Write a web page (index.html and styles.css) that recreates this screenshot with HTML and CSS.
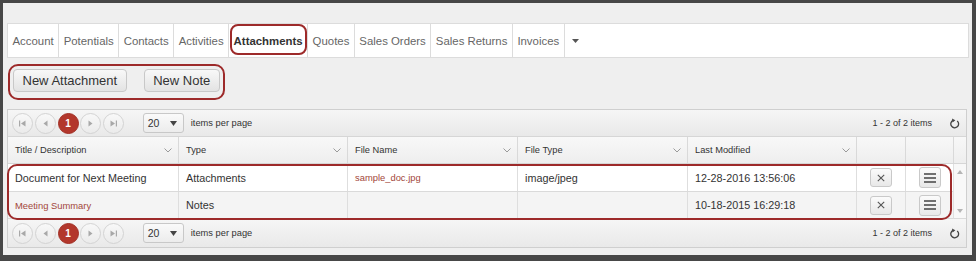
FILE: index.html
```html
<!DOCTYPE html>
<html>
<head>
<meta charset="utf-8">
<link rel="stylesheet" href="styles.css">
</head>
<body>
<div class="panel">
  <ul class="tabs">
    <li class="tab">Account</li>
    <li class="tab">Potentials</li>
    <li class="tab">Contacts</li>
    <li class="tab">Activities</li>
    <li class="tab active">Attachments</li>
    <li class="tab">Quotes</li>
    <li class="tab">Sales Orders</li>
    <li class="tab">Sales Returns</li>
    <li class="tab">Invoices</li>
    <li class="tab more"><svg width="7" height="4" viewBox="0 0 7 4"><path d="M0 0H7L3.5 4Z" fill="#555"/></svg></li>
  </ul>

  <div class="toolbar">
    <div class="callout">
      <button class="btn">New Attachment</button>
      <button class="btn">New Note</button>
    </div>
  </div>

  <div class="grid">
    <div class="pager">
      <span class="pbtn"><svg width="7" height="7" viewBox="0 0 7 7"><rect x="0" y="0.5" width="1.2" height="6" fill="#a8a8a8"/><path d="M6.5 0.5V6.5L2 3.5Z" fill="#a8a8a8"/></svg></span>
      <span class="pbtn"><svg width="5" height="7" viewBox="0 0 5 7"><path d="M4.5 0.5V6.5L0.5 3.5Z" fill="#a8a8a8"/></svg></span>
      <span class="pbtn current">1</span>
      <span class="pbtn"><svg width="5" height="7" viewBox="0 0 5 7"><path d="M0.5 0.5V6.5L4.5 3.5Z" fill="#a8a8a8"/></svg></span>
      <span class="pbtn"><svg width="7" height="7" viewBox="0 0 7 7"><path d="M0.5 0.5V6.5L5 3.5Z" fill="#a8a8a8"/><rect x="5.8" y="0.5" width="1.2" height="6" fill="#a8a8a8"/></svg></span>
      <span class="psize">20<svg class="caret" width="7" height="5" viewBox="0 0 7 5"><path d="M0 0H7L3.5 5Z" fill="#444"/></svg></span>
      <span class="plabel">items per page</span>
      <span class="pinfo">1 - 2 of 2 items</span>
      <span class="refresh"><svg width="10" height="11" viewBox="0 0 10 11"><path d="M7.2 2.9A3.9 3.9 0 1 1 3.2 2.3" fill="none" stroke="#444" stroke-width="1.3"/><path d="M2 0.6L5.4 2.2L2.6 4.6Z" fill="#444"/></svg></span>
    </div>

    <div class="ghead">
      <div class="hcell"><span>Title / Description</span><svg class="chev" width="8" height="5" viewBox="0 0 8 5"><path d="M0.5 0.5L4 4L7.5 0.5" fill="none" stroke="#9a9a9a"/></svg></div>
      <div class="hcell"><span>Type</span><svg class="chev" width="8" height="5" viewBox="0 0 8 5"><path d="M0.5 0.5L4 4L7.5 0.5" fill="none" stroke="#9a9a9a"/></svg></div>
      <div class="hcell"><span>File Name</span><svg class="chev" width="8" height="5" viewBox="0 0 8 5"><path d="M0.5 0.5L4 4L7.5 0.5" fill="none" stroke="#9a9a9a"/></svg></div>
      <div class="hcell"><span>File Type</span><svg class="chev" width="8" height="5" viewBox="0 0 8 5"><path d="M0.5 0.5L4 4L7.5 0.5" fill="none" stroke="#9a9a9a"/></svg></div>
      <div class="hcell"><span>Last Modified</span><svg class="chev" width="8" height="5" viewBox="0 0 8 5"><path d="M0.5 0.5L4 4L7.5 0.5" fill="none" stroke="#9a9a9a"/></svg></div>
      <div class="hcell"></div>
      <div class="hcell"></div>
      <div class="hcell"></div>
    </div>

    <div class="gbody">
      <div class="rows">
        <div class="row">
          <div class="cell">Document for Next Meeting</div>
          <div class="cell">Attachments</div>
          <div class="cell"><span class="link">sample_doc.jpg</span></div>
          <div class="cell">image/jpeg</div>
          <div class="cell">12-28-2016 13:56:06</div>
          <div class="cell act"><span class="xbtn"><svg width="8" height="8" viewBox="0 0 8 8"><path d="M0.8 0.8L7.2 7.2M7.2 0.8L0.8 7.2" stroke="#555" stroke-width="1.1"/></svg></span></div>
          <div class="cell act"><span class="mbtn"><svg width="12" height="10" viewBox="0 0 12 10"><path d="M0 1H12M0 5H12M0 9H12" stroke="#444" stroke-width="1.6"/></svg></span></div>
        </div>
        <div class="row alt">
          <div class="cell"><span class="link">Meeting Summary</span></div>
          <div class="cell">Notes</div>
          <div class="cell"></div>
          <div class="cell"></div>
          <div class="cell">10-18-2015 16:29:18</div>
          <div class="cell act"><span class="xbtn"><svg width="8" height="8" viewBox="0 0 8 8"><path d="M0.8 0.8L7.2 7.2M7.2 0.8L0.8 7.2" stroke="#555" stroke-width="1.1"/></svg></span></div>
          <div class="cell act"><span class="mbtn"><svg width="12" height="10" viewBox="0 0 12 10"><path d="M0 1H12M0 5H12M0 9H12" stroke="#444" stroke-width="1.6"/></svg></span></div>
        </div>
      </div>
      <div class="vscroll">
        <svg width="6" height="4" viewBox="0 0 6 4"><path d="M0 4H6L3 0Z" fill="#b5b5b5"/></svg>
        <svg width="6" height="4" viewBox="0 0 6 4"><path d="M0 0H6L3 4Z" fill="#b5b5b5"/></svg>
      </div>
      <div class="rows-callout"></div>
    </div>

    <div class="pager bottom">
      <span class="pbtn"><svg width="7" height="7" viewBox="0 0 7 7"><rect x="0" y="0.5" width="1.2" height="6" fill="#a8a8a8"/><path d="M6.5 0.5V6.5L2 3.5Z" fill="#a8a8a8"/></svg></span>
      <span class="pbtn"><svg width="5" height="7" viewBox="0 0 5 7"><path d="M4.5 0.5V6.5L0.5 3.5Z" fill="#a8a8a8"/></svg></span>
      <span class="pbtn current">1</span>
      <span class="pbtn"><svg width="5" height="7" viewBox="0 0 5 7"><path d="M0.5 0.5V6.5L4.5 3.5Z" fill="#a8a8a8"/></svg></span>
      <span class="pbtn"><svg width="7" height="7" viewBox="0 0 7 7"><path d="M0.5 0.5V6.5L5 3.5Z" fill="#a8a8a8"/><rect x="5.8" y="0.5" width="1.2" height="6" fill="#a8a8a8"/></svg></span>
      <span class="psize">20<svg class="caret" width="7" height="5" viewBox="0 0 7 5"><path d="M0 0H7L3.5 5Z" fill="#444"/></svg></span>
      <span class="plabel">items per page</span>
      <span class="pinfo">1 - 2 of 2 items</span>
      <span class="refresh"><svg width="10" height="11" viewBox="0 0 10 11"><path d="M7.2 2.9A3.9 3.9 0 1 1 3.2 2.3" fill="none" stroke="#444" stroke-width="1.3"/><path d="M2 0.6L5.4 2.2L2.6 4.6Z" fill="#444"/></svg></span>
    </div>
  </div>
</div>
</body>
</html>
```

FILE: styles.css
```css
* { box-sizing: border-box; }

body {
  margin: 0;
  background: #474747;
  font-family: "Liberation Sans", Arial, sans-serif;
}

.panel {
  margin: 3px 4px 0 3px;
  height: 252px;
  background: #efefef;
  padding: 20px 3px 0 4px;
}

/* tabs */
.tabs {
  list-style: none;
  margin: 0;
  padding: 0;
  display: flex;
  height: 35px;
  background: #fff;
  border: 1px solid #dcdcdc;
}
.tab {
  position: relative;
  display: flex;
  align-items: center;
  padding: 0 4.5px;
  border-right: 1px solid #dcdcdc;
  font-size: 11.4px;
  color: #666;
}
.tab.active {
  font-weight: bold;
  font-size: 11.4px;
  color: #333;
}
.tab.active::after {
  content: "";
  position: absolute;
  left: 1px;
  right: 0;
  top: 0;
  bottom: 2px;
  border: 2px solid #9d2a2a;
  border-radius: 8px;
}
.tab.more {
  border-right: none;
  padding: 0 7px;
}

/* toolbar */
.toolbar {
  display: flex;
  margin: 6px 0 0 1px;
}
.callout {
  display: flex;
  gap: 17px;
  padding: 3px 3px 6px 3px;
  border: 2px solid #9d2a2a;
  border-radius: 10px;
}
.btn {
  height: 23px;
  padding: 0 8.5px;
  font-family: "Liberation Sans", Arial, sans-serif;
  font-size: 13px;
  color: #333;
  background: linear-gradient(#f8f8f8, #e3e3e3);
  border: 1px solid #c8c8c8;
  border-radius: 4px;
}

/* grid */
.grid {
  margin-top: 9px;
  width: 960px;
  border: 1px solid #cfcfcf;
  background: #fff;
}
.pager {
  display: flex;
  align-items: center;
  height: 27px;
  padding: 0 6px 0 4px;
  background: linear-gradient(#f6f6f6, #e9e9e9);
  border-bottom: 1px solid #d6d6d6;
  font-size: 9.3px;
  color: #333;
}
.pager.bottom {
  height: 28px;
  border-bottom: none;
}
.pbtn {
  width: 21px;
  height: 21px;
  margin-right: 1.75px;
  border-radius: 50%;
  border: 1px solid #d3d3d3;
  background: linear-gradient(#f8f8f8, #ebebeb);
  display: flex;
  align-items: center;
  justify-content: center;
}
.pbtn.current {
  background: #b3372c;
  border-color: #a23025;
  color: #fff;
  font-weight: bold;
  font-size: 10px;
}
.psize {
  margin-left: 17px;
  width: 41px;
  height: 20px;
  border: 1px solid #c8c8c8;
  border-radius: 3px;
  background: linear-gradient(#fafafa, #ececec);
  display: flex;
  align-items: center;
  justify-content: space-between;
  padding: 0 6px 0 4px;
  font-size: 10.5px;
  color: #333;
}
.plabel {
  margin-left: 7px;
}
.pinfo {
  margin-left: auto;
  font-size: 9px;
}
.refresh {
  margin-left: 18px;
  display: flex;
}

.ghead {
  display: grid;
  grid-template-columns: 170px 169px 170px 170px 169px 49px 48px 13px;
  height: 27px;
  background: linear-gradient(#f8f8f8, #eeeeee);
  border-bottom: 1px solid #d6d6d6;
}
.hcell {
  display: flex;
  align-items: center;
  justify-content: space-between;
  padding: 0 6px 0 7px;
  border-left: 1px solid #d9d9d9;
  font-size: 9.3px;
  color: #333;
}
.hcell:first-child { border-left: none; }

.gbody {
  position: relative;
  display: flex;
}
.rows { width: 945px; }
.row {
  display: grid;
  grid-template-columns: 170px 169px 170px 170px 169px 49px 48px;
  height: 28px;
  border-bottom: 1px solid #dadada;
  background: #fff;
}
.row.alt {
  height: 27px;
  background: #f4f4f4;
}
.cell {
  display: flex;
  align-items: center;
  padding: 0 6px 0 7px;
  border-left: 1px solid #dedede;
  font-size: 10.8px;
  color: #333;
}
.cell:first-child { border-left: none; }
.cell.act {
  justify-content: center;
  padding: 0;
}
.link {
  font-size: 9.4px;
  color: #a3473b;
}
.xbtn, .mbtn {
  display: flex;
  align-items: center;
  justify-content: center;
  width: 22px;
  height: 19px;
  border: 1px solid #c9c9c9;
  border-radius: 3px;
  background: linear-gradient(#fbfbfb, #e8e8e8);
}
.mbtn { height: 21px; }

.vscroll {
  width: 13px;
  border-left: 1px solid #e0e0e0;
  border-bottom: 1px solid #dadada;
  background: #f8f8f8;
  display: flex;
  flex-direction: column;
  justify-content: space-between;
  align-items: center;
  padding: 6px 0 5px;
}
.rows-callout {
  position: absolute;
  left: -1px;
  top: 0;
  width: 945px;
  height: 56px;
  border: 2px solid #9d2a2a;
  border-radius: 10px;
  pointer-events: none;
}
```
